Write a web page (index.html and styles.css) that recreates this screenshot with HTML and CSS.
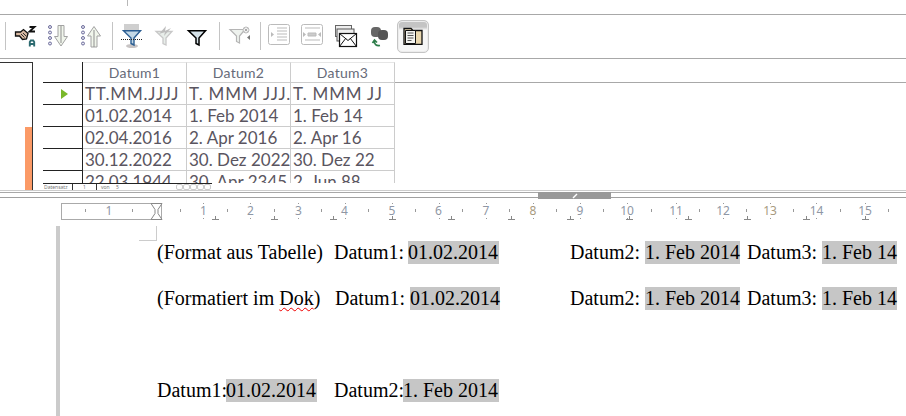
FILE: index.html
```html
<!DOCTYPE html>
<html lang="de">
<head>
<meta charset="utf-8">
<title>Datum</title>
<link rel="stylesheet" href="styles.css">
</head>
<body>
<div class="topbar"><span class="topbar-tick"></span></div>

<div class="toolbar">
  <span class="sep"></span>
  <span class="tool t-sort">
    <svg width="24" height="24" viewBox="0 0 24 24"><path d="M1.500 8h5l3-2.500 4.500 4-1.500 5.500-4 .5-3-3.500h-4z" fill="#d9b9a2" stroke="#111" stroke-width="1.300"/><path d="M7 10l3.500 3.500M9 9l3.500 3.500" stroke="#333"/><path d="M15.500 3h5l-5 4.500h5.500" fill="none" stroke="#111" stroke-width="1.800"/><path d="M15.800 22.500v-4.500l1-1.500h2.400l1 1.500v4.500M16 20h4" fill="none" stroke="#2c6a70" stroke-width="1.900"/></svg>
  </span>
  <span class="tool t-down">
    <svg width="24" height="24" viewBox="0 0 24 24"><g fill="#e6e6f0" stroke="#6e6e9c"><circle cx="3" cy="3" r="1.500"/><circle cx="3" cy="8.500" r="1.500"/><circle cx="3" cy="14" r="1.500"/><circle cx="3" cy="19.500" r="1.500"/></g><path d="M11 1.500h6v11h3.500L14 22 7.500 12.500H11z" fill="#f1f6ec" stroke="#a2a2a2"/><path d="M14 2v17" stroke="#8f8f8f"/></svg>
  </span>
  <span class="tool t-up">
    <svg width="24" height="24" viewBox="0 0 24 24"><g fill="#e6e6f0" stroke="#6e6e9c"><circle cx="3" cy="3" r="1.500"/><circle cx="3" cy="8.500" r="1.500"/><circle cx="3" cy="14" r="1.500"/><circle cx="3" cy="19.500" r="1.500"/></g><path d="M11 23V12H7.500L14 2.500 20.500 12H17v11z" fill="#f1f6ec" stroke="#a2a2a2"/><path d="M14 6v17" stroke="#8f8f8f"/></svg>
  </span>
  <span class="sep sep-a"></span>
  <span class="tool t-auto">
    <svg width="24" height="24" viewBox="0 0 24 24"><rect x="4" y="0" width="15" height="6" fill="#cfcfcf"/><ellipse cx="12" cy="22" rx="6" ry="2" fill="#c8c4c4"/><path d="M3.500 6.800h17L14 14v7l-3-1.500V14z" fill="#c3d8e6" stroke="#2a5d92" stroke-width="1.400"/><path d="M1 15.500h22" stroke="#222" stroke-dasharray="1 1"/></svg>
  </span>
  <span class="tool t-std">
    <svg width="24" height="24" viewBox="0 0 24 24"><path d="M4 7.500h16L14 14v7l-3-1.500V14z" fill="#e8eeea" stroke="#c8c8c8" stroke-width="1.300"/><path d="M7 10l7-8-1 5 6-3-7 8 1-4z" fill="#bdbdbd"/></svg>
  </span>
  <span class="tool t-filter">
    <svg width="24" height="24" viewBox="0 0 24 24"><path d="M3.500 6.800h17L14 14v7l-3-1.500V14z" fill="#d5e1e8" stroke="#000" stroke-width="1.500"/></svg>
  </span>
  <span class="sep sep-b"></span>
  <span class="tool t-clear">
    <svg width="24" height="24" viewBox="0 0 24 24"><path d="M2 5.500h15l-5.500 6.500v7l-3-1.500V12z" fill="#eef2ee" stroke="#b5b5b5" stroke-width="1.200"/><circle cx="18" cy="6" r="3" fill="#f2f2f2" stroke="#bbb"/><path d="M16.500 4.500l3 3M19.500 4.500l-3 3" stroke="#aaa"/><path d="M22 11v5l-3-2.500z" fill="#777"/></svg>
  </span>
  <span class="sep sep-c"></span>
  <span class="tool t-text1">
    <svg width="24" height="24" viewBox="0 0 24 24"><rect x="1.500" y=".5" width="21" height="20" rx="2" fill="#fff" stroke="#bbb"/><path d="M10 4h10M10 7h10M10 10h10M10 13h10M10 16h10" stroke="#bbb"/><path d="M4 8l3 2.500L4 13z" fill="#bbb"/></svg>
  </span>
  <span class="tool t-text2">
    <svg width="24" height="24" viewBox="0 0 24 24"><rect x="1.500" y=".5" width="21" height="20" rx="2" fill="#fff" stroke="#bbb"/><path d="M5 4h15M5 16h15M8 9h8v3H8z" stroke="#bbb" fill="#ccc"/><path d="M3 8l3 2.500L3 13zM21 8l-3 2.500 3 2.500z" fill="#bbb"/></svg>
  </span>
  <span class="tool t-mail">
    <svg width="24" height="24" viewBox="0 0 24 24"><rect x="1.500" y="1.500" width="16" height="11" fill="#eee" stroke="#666"/><rect x="3" y="5" width="17" height="12" fill="#eee" stroke="#555"/><rect x="5.500" y="9.500" width="17" height="13" fill="#fff" stroke="#111" stroke-width="1.200"/><path d="M5.500 9.500l8.500 7 8.500-7M5.500 22.500l6.500-8.500M22.500 22.500l-6.500-8.500" fill="none" stroke="#111"/></svg>
  </span>
  <span class="tool t-conv">
    <svg width="24" height="24" viewBox="0 0 24 24"><rect x="4" y="3" width="10" height="10" rx="4" fill="#666"/><rect x="11" y="6" width="10" height="10" rx="4" fill="#555"/><path d="M13 21.500c-4 .5-6-1.500-5.500-4.500M5.500 19l2-3 2.500 2.500" fill="none" stroke="#2e7d4a" stroke-width="1.700"/></svg>
  </span>
  <span class="tool tool-active t-src">
    <svg width="20" height="18" viewBox="0 0 20 18"><path d="M1 1.500h7l2 2h9v14H1z" fill="#ead8b0" stroke="#111" stroke-width="1.300"/><path d="M2.500 3.500h10v13h-10z" fill="#f3f3f0" stroke="#111"/><path d="M4.500 6h6M4.500 8.500h6M4.500 11h6M4.500 13.500h4" stroke="#555"/></svg>
  </span>
</div>

<div class="beamer">
  <div class="sidepanel"><span class="sidepanel-bar"></span></div>
  <div class="grid-wrap">
    <div class="grid-clip">
      <div class="grid">
        <div class="corner"></div><div class="head">Datum1</div><div class="head">Datum2</div><div class="head">Datum3</div>
        <div class="handle"><span class="arrow"></span></div><div class="cell cell-format">TT.MM.JJJJ</div><div class="cell cell-format">T. MMM JJJ.</div><div class="cell cell-format">T. MMM JJ</div>
        <div class="handle"></div><div class="cell">01.02.2014</div><div class="cell">1. Feb 2014</div><div class="cell">1. Feb 14</div>
        <div class="handle"></div><div class="cell">02.04.2016</div><div class="cell">2. Apr 2016</div><div class="cell">2. Apr 16</div>
        <div class="handle"></div><div class="cell">30.12.2022</div><div class="cell">30. Dez 2022</div><div class="cell">30. Dez 22</div>
        <div class="handle"></div><div class="cell">22.03.1944</div><div class="cell">30. Apr 2345</div><div class="cell">2. Jun 88</div>
      </div>
    </div>
    <div class="navbar">
      <span class="nav-label">Datensatz</span><span class="nav-num">1</span><span class="nav-of">von</span><span class="nav-total">5</span>
      <span class="nav-buttons"><i></i><i></i><i></i><i></i><i></i></span>
    </div>
  </div>
  <div class="head-line"></div>
</div>

<div class="splitter">
  <span class="splitter-handle"><svg width="8" height="6" viewBox="0 0 8 6"><path d="M2 5l4-4" stroke="#fff" stroke-width="1.500"/></svg></span>
</div>

<div class="ruler">
  <svg width="906" height="24" viewBox="0 0 906 24" class="ruler-svg">
    <rect x="61.500" y="1.500" width="100" height="16" fill="#fff" stroke="#aaa"/>
    <path d="M151 1.500h11l-4 6v4l4 6h-11l4-6v-4z" fill="#fff" stroke="#888"/>
    <path d="M85.500 7v3M132.500 7v3M180.500 7v3M227.500 7v3M274.500 7v3M321.500 7v3M368.500 7v3M415.500 7v3M462.500 7v3M509.500 7v3M556.500 7v3M603.500 7v3M651.500 7v3M699.500 7v3M746.500 7v3M793.500 7v3M840.500 7v3M888.500 7v3" stroke="#999"/>
    <path d="M203.500 1v1M203.500 16v1M250.500 1v1M250.500 16v1M298.500 1v1M298.500 16v1M345.500 1v1M345.500 16v1M392.500 1v1M392.500 16v1M439.500 1v1M439.500 16v1M486.500 1v1M486.500 16v1M533.500 1v1M533.500 16v1M580.500 1v1M580.500 16v1M627.500 1v1M627.500 16v1M676.500 1v1M676.500 16v1M723.500 1v1M723.500 16v1M770.500 1v1M770.500 16v1M816.500 1v1M816.500 16v1M865.500 1v1M865.500 16v1" stroke="#999"/>
    <path d="M215.500 14v3M212 17.500h7M274.500 14v3M271 17.500h7M333.500 14v3M330 17.500h7M392.500 14v3M389 17.500h7M451.500 14v3M448 17.500h7M511.500 14v3M508 17.500h7M570.500 14v3M567 17.500h7M629.500 14v3M626 17.500h7M688.500 14v3M685 17.500h7M747.500 14v3M744 17.500h7M806.500 14v3M803 17.500h7M865.500 14v3M862 17.500h7" stroke="#888"/>
    <g class="ruler-num">
      <text x="109" y="13">1</text><text x="203.500" y="13">1</text><text x="250.500" y="13">2</text><text x="298.500" y="13">3</text><text x="344.500" y="13">4</text><text x="392" y="13">5</text><text x="438.500" y="13">6</text><text x="486" y="13">7</text><text x="533" y="13" class="num-warm">8</text><text x="580" y="13">9</text><text x="627" y="13">10</text><text x="676" y="13">11</text><text x="723" y="13">12</text><text x="770" y="13" class="num-warm">13</text><text x="816.500" y="13">14</text><text x="865" y="13">15</text>
    </g>
  </svg>
</div>

<div class="doc">
  <div class="page-edge"></div>
  <div class="crop-mark"></div>
  <div class="lines">
    <div class="line">
      <span class="tab t1">(Format aus Tabelle)</span>
      <span class="tab t2">Datum1: <span class="field tight">01.02.2014</span></span>
      <span class="tab t3">Datum2: <span class="field">1. Feb 2014</span></span>
      <span class="tab">Datum3: <span class="field">1. Feb 14</span></span>
    </div>
    <div class="line line-2">
      <span class="tab t1b"><span>(Formatiert im <span class="spell">Dok</span>)</span></span>
      <span class="tab t2b">Datum1: <span class="field">01.02.2014</span></span>
      <span class="tab t3">Datum2: <span class="field">1. Feb 2014</span></span>
      <span class="tab">Datum3: <span class="field">1. Feb 14</span></span>
    </div>
    <div class="line line-3">
      <span class="tab t1">Datum1:<span class="field tight">01.02.2014</span></span>
      <span class="tab">Datum2:<span class="field tight">1. Feb 2014</span></span>
    </div>
  </div>
</div>
</body>
</html>
```

FILE: styles.css
```css
* { box-sizing: border-box; }
html, body { margin: 0; padding: 0; }
body { width: 906px; height: 416px; overflow: hidden; background: #fff; font-family: "Liberation Serif", serif; }

.topbar { height: 15px; border-bottom: 1px solid #a8a8a8; padding-left: 127px; }
.topbar-tick { display: block; width: 1px; height: 6px; background: #b8b8b8; }

.toolbar { height: 44px; border-bottom: 1px solid #a8a8a8; display: flex; align-items: center; padding: 0 0 1px 5px; }
.sep { width: 1px; height: 28px; background: #c4c4c4; flex: none; }
.tool { flex: none; display: flex; width: 24px; height: 24px; }
.t-sort { margin-left: 8px; }
.t-down { margin-left: 9px; }
.t-up { margin-left: 9px; }
.sep-a { margin-left: 8px; }
.t-auto { margin-left: 7px; }
.t-std { margin-left: 8px; }
.t-filter { margin-left: 9px; }
.sep-b { margin-left: 10px; }
.t-clear { margin-left: 8px; }
.sep-c { margin-left: 8px; }
.t-text1 { margin-left: 6px; }
.t-text2 { margin-left: 9px; }
.t-mail { margin-left: 10px; }
.t-conv { margin-left: 9px; }
.tool-active { width: 32px; height: 33px; margin-left: 6px; border: 1px solid #c4c4c4; border-radius: 5px; background: linear-gradient(#c4c4c4 0, #c4c4c4 6px, #f6f6f6 9px); align-items: center; justify-content: center; box-shadow: inset 0 0 0 1px #ececec; }

.beamer { position: relative; height: 131px; display: flex; padding-top: 3px; }
.sidepanel { width: 33px; height: 129px; border: 1px solid #333; border-width: 1px 1px 1px 0; display: flex; align-items: flex-end; justify-content: flex-end; flex: none; }
.sidepanel-bar { width: 7px; height: 63px; background: #fb9a66; }
.grid-wrap { margin-left: 10px; width: 352px; flex: none; position: relative; z-index: 1; }
.grid-clip { height: 121px; overflow: hidden; }
.grid { display: grid; grid-template-columns: 40px 104px 104px 104px; grid-template-rows: 21px; grid-auto-rows: 22px; font-family: Lato, sans-serif; color: #5a5560; }
.corner, .handle { border-right: 1px solid #222; border-bottom: 1px solid #222; display: flex; align-items: center; justify-content: center; }
.corner { height: 21px; }
.head { height: 21px; border-right: 1px solid #ccc; border-bottom: 1px solid #ccc; border-top: 1px solid #e6e6e6; text-align: center; font-size: 14px; line-height: 20px; color: #666a78; letter-spacing: .3px; }
.cell { border-right: 1px solid #ccc; border-bottom: 1px solid #ccc; font-size: 17px; line-height: 21px; padding-left: 2px; white-space: nowrap; overflow: hidden; }
.cell-format { letter-spacing: .8px; }
.arrow { width: 0; height: 0; margin-left: 3px; border-left: 7px solid #7ab82a; border-top: 5px solid transparent; border-bottom: 5px solid transparent; }
.navbar { position: relative; width: 169px; height: 7px; border-top: 1px solid #222; display: flex; align-items: center; font: 5px/6px "Noto Sans", sans-serif; color: #777; }
.nav-label { width: 29px; padding-left: 1px; }
.nav-num { width: 25px; border-left: 1px solid #333; border-right: 1px solid #333; text-align: center; }
.nav-of { width: 19px; padding-left: 4px; }
.nav-total { width: 60px; }
.nav-buttons { display: flex; }
.nav-buttons i { display: block; width: 7px; height: 6px; border: 1px solid #ccc; border-radius: 2px; }
.head-line { position: absolute; left: 395px; right: 0; top: 23px; height: 1px; background: #a8a8a8; }

.splitter { height: 8px; border-top: 1px solid #ccc; border-bottom: 1px solid #a0a0a0; position: relative; }
.splitter::before { content: ""; display: block; height: 1px; background: #a8a8a8; margin-top: 1px; }
.splitter-handle { position: absolute; left: 538px; top: 1px; width: 73px; height: 7px; background: #999; display: flex; align-items: center; justify-content: center; }

.ruler { height: 28px; padding-top: 4px; }
.ruler-svg { display: block; }
.ruler-num text { font: 12px "Noto Sans", sans-serif; fill: #8f97a5; text-anchor: middle; }
.ruler-num .num-warm { fill: #a89a80; }

.doc { position: relative; height: 190px; padding: 15px 0 0 157px; font-size: 20px; color: #000; }
.page-edge { position: absolute; left: 56px; top: 0; bottom: 0; width: 4px; background: #cbcbcb; }
.crop-mark { position: absolute; left: 139px; top: 0; width: 18px; height: 15px; border-right: 1px solid #ccc; border-bottom: 1px solid #ccc; }
.lines { display: flex; flex-direction: column; }
.line { display: flex; height: 23px; line-height: 23px; white-space: pre; }
.line-2 { margin-top: 23px; }
.line-3 { margin-top: 69px; }
.tab { flex: none; }
.t1 { width: 177px; }
.t1b { width: 178px; }
.t2 { width: 236px; }
.t2b { width: 235px; }
.t3 { width: 177px; }
.field { background: #c6c6c6; display: inline-block; height: 23px; }
.tight { margin-left: -1px; padding-right: 1px; }
.spell { text-decoration: underline wavy #e00; text-decoration-thickness: 1px; text-underline-offset: 2px; }
```
